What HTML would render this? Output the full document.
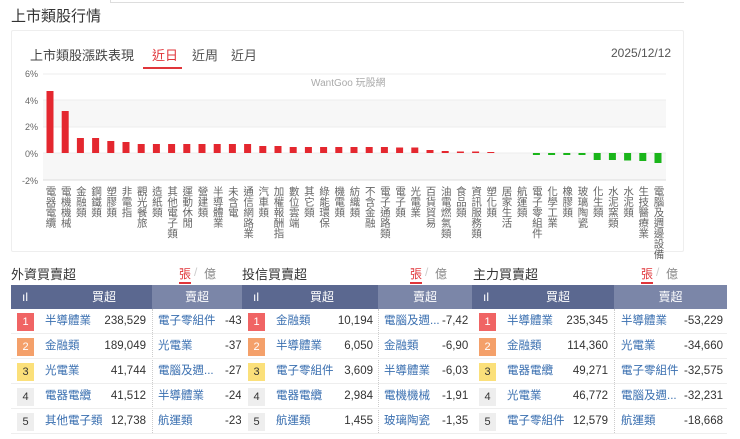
<!DOCTYPE html>
<html><head><meta charset="utf-8"><style>
*{margin:0;padding:0;box-sizing:border-box}
body{width:740px;height:438px;background:#fff;font-family:"Liberation Sans","Noto Sans CJK TC",sans-serif;position:relative;overflow:hidden;color:#333}
.a{position:absolute;white-space:nowrap}
.lab{position:absolute;top:186px;writing-mode:vertical-rl;font-size:10.5px;line-height:11px;color:#666;letter-spacing:0}
.hd{position:absolute;top:285px;height:24px;color:#fff;font-size:12px;line-height:24px;text-align:center}
.row{position:absolute;height:25px;font-size:12px;line-height:25px;border-bottom:1px solid #eee}
.bd{position:absolute;width:17px;height:18px;top:4px;font-size:11px;line-height:18px;text-align:center;color:#fff}
.n{position:absolute;color:#3a6fb0;font-size:11.5px}
.v{position:absolute;text-align:right;color:#333;font-size:11.5px}
</style></head><body>
<div class="a" style="left:110px;top:0;width:574px;height:3px;border-left:1px solid #ddd;border-bottom:1px solid #ddd"></div>
<div class="a" style="left:11px;top:5px;font-size:15px;color:#333">上市類股行情</div>
<div class="a" style="left:11px;top:30px;width:673px;height:222px;border:1px solid #eee;border-radius:2px"></div>
<div class="a" style="left:30px;top:45px;font-size:13px;color:#444">上市類股漲跌表現</div>
<div class="a" style="left:152px;top:45px;font-size:13px;color:#e0353a">近日</div>
<div class="a" style="left:143px;top:67px;width:39px;height:2px;background:#e0353a"></div>
<div class="a" style="left:192px;top:45px;font-size:13px;color:#555">近周</div>
<div class="a" style="left:231px;top:45px;font-size:13px;color:#555">近月</div>
<div class="a" style="left:611px;top:46px;font-size:12px;color:#555">2025/12/12</div>
<svg class="a" style="left:0;top:0" width="740" height="260">
<rect x="43" y="100" width="623" height="27" fill="#f7f7f7"/>
<rect x="43" y="153" width="623" height="27" fill="#f7f7f7"/>
<g stroke="#eee"><line x1="43" y1="74" x2="666" y2="74"/><line x1="43" y1="100" x2="666" y2="100"/><line x1="43" y1="127" x2="666" y2="127"/><line x1="43" y1="153" x2="666" y2="153"/><line x1="43" y1="180" x2="666" y2="180" stroke="#ddd"/></g>
<g font-size="9" fill="#666" text-anchor="end" font-family="Liberation Sans"><text x="38" y="77">6%</text><text x="38" y="104">4%</text><text x="38" y="130">2%</text><text x="38" y="157">0%</text><text x="38" y="184">-2%</text></g>
<text x="311" y="86" font-size="10" fill="#aaa" font-family="Liberation Sans,Noto Sans CJK TC,sans-serif">WantGoo 玩股網</text>
<g fill="#e4272f">
<rect x="46.5" y="91" width="7" height="62"/><rect x="61.7" y="111" width="7" height="42"/><rect x="76.9" y="138" width="7" height="15"/><rect x="92.1" y="138" width="7" height="15"/><rect x="107.3" y="141" width="7" height="12"/><rect x="122.5" y="142" width="7" height="11"/><rect x="137.7" y="144" width="7" height="9"/><rect x="152.9" y="144" width="7" height="9"/><rect x="168.1" y="144" width="7" height="9"/><rect x="183.3" y="144" width="7" height="9"/><rect x="198.5" y="144" width="7" height="9"/><rect x="213.7" y="144" width="7" height="9"/><rect x="228.9" y="144" width="7" height="9"/><rect x="244.1" y="144" width="7" height="9"/><rect x="259.3" y="146" width="7" height="7"/><rect x="274.5" y="146" width="7" height="7"/><rect x="289.7" y="147" width="7" height="6"/><rect x="304.9" y="147" width="7" height="6"/><rect x="320.1" y="147" width="7" height="6"/><rect x="335.3" y="147" width="7" height="6"/><rect x="350.5" y="147" width="7" height="6"/><rect x="365.7" y="147" width="7" height="6"/><rect x="380.9" y="147" width="7" height="6"/><rect x="396.1" y="147.5" width="7" height="5.5"/><rect x="411.3" y="147.5" width="7" height="5.5"/><rect x="426.5" y="150" width="7" height="3"/><rect x="441.7" y="151" width="7" height="2"/><rect x="456.9" y="151.5" width="7" height="1.5"/><rect x="472.1" y="151.5" width="7" height="1.5"/><rect x="487.3" y="152" width="7" height="1"/>
</g>
<g fill="#1ab51a">
<rect x="532.9" y="153" width="7" height="2"/><rect x="548.1" y="153" width="7" height="2"/><rect x="563.3" y="153" width="7" height="2"/><rect x="578.5" y="153" width="7" height="2"/><rect x="593.7" y="153" width="7" height="7"/><rect x="608.9" y="153" width="7" height="7"/><rect x="624.1" y="153" width="7" height="7.5"/><rect x="639.3" y="153" width="7" height="8"/><rect x="654.5" y="153" width="7" height="10"/>
</g>
</svg>
<div class="lab" style="left:44.5px">電器電纜</div><div class="lab" style="left:59.7px">電機機械</div><div class="lab" style="left:74.9px">金融類</div><div class="lab" style="left:90.1px">鋼鐵類</div><div class="lab" style="left:105.3px">塑膠類</div><div class="lab" style="left:120.5px">非電指</div><div class="lab" style="left:135.7px">觀光餐旅</div><div class="lab" style="left:150.9px">造紙類</div><div class="lab" style="left:166.1px">其他電子類</div><div class="lab" style="left:181.3px">運動休閒</div><div class="lab" style="left:196.5px">營建類</div><div class="lab" style="left:211.7px">半導體業</div><div class="lab" style="left:226.9px">未含電</div><div class="lab" style="left:242.1px">通信網路業</div><div class="lab" style="left:257.3px">汽車類</div><div class="lab" style="left:272.5px">加權報酬指</div><div class="lab" style="left:287.7px">數位雲端</div><div class="lab" style="left:302.9px">其它類</div><div class="lab" style="left:318.1px">綠能環保</div><div class="lab" style="left:333.3px">機電類</div><div class="lab" style="left:348.5px">紡織類</div><div class="lab" style="left:363.7px">不含金融</div><div class="lab" style="left:378.9px">電子通路類</div><div class="lab" style="left:394.1px">電子類</div><div class="lab" style="left:409.3px">光電業</div><div class="lab" style="left:424.5px">百貨貿易</div><div class="lab" style="left:439.7px">油電燃氣類</div><div class="lab" style="left:454.9px">食品類</div><div class="lab" style="left:470.1px">資訊服務類</div><div class="lab" style="left:485.3px">塑化類</div><div class="lab" style="left:500.5px">居家生活</div><div class="lab" style="left:515.7px">航運類</div><div class="lab" style="left:530.9px">電子零組件</div><div class="lab" style="left:546.1px">化學工業</div><div class="lab" style="left:561.3px">橡膠類</div><div class="lab" style="left:576.5px">玻璃陶瓷</div><div class="lab" style="left:591.7px">化生類</div><div class="lab" style="left:606.9px">水泥窯類</div><div class="lab" style="left:622.1px">水泥類</div><div class="lab" style="left:637.3px">生技醫療業</div><div class="lab" style="left:652.5px">電腦及週邊設備</div>

<div class="a" style="left:11px;top:264px;font-size:13px;color:#333">外資買賣超</div>
<div class="a" style="left:179px;top:265px;font-size:12px;color:#e0353a">張</div><div class="a" style="left:179px;top:282px;width:12px;height:2px;background:#e0353a"></div>
<div class="a" style="left:194px;top:265px;font-size:12px;color:#ccc">/</div><div class="a" style="left:204px;top:265px;font-size:12px;color:#888">億</div>
<div class="a" style="left:242px;top:264px;font-size:13px;color:#333">投信買賣超</div>
<div class="a" style="left:410px;top:265px;font-size:12px;color:#e0353a">張</div><div class="a" style="left:410px;top:282px;width:12px;height:2px;background:#e0353a"></div>
<div class="a" style="left:425px;top:265px;font-size:12px;color:#ccc">/</div><div class="a" style="left:435px;top:265px;font-size:12px;color:#888">億</div>
<div class="a" style="left:473px;top:264px;font-size:13px;color:#333">主力買賣超</div>
<div class="a" style="left:641px;top:265px;font-size:12px;color:#e0353a">張</div><div class="a" style="left:641px;top:282px;width:12px;height:2px;background:#e0353a"></div>
<div class="a" style="left:656px;top:265px;font-size:12px;color:#ccc">/</div><div class="a" style="left:666px;top:265px;font-size:12px;color:#888">億</div>

<div class="hd" style="left:11px;width:141px;background:#5b6890"><span style="position:absolute;left:0;width:28px">ıl</span><span style="position:absolute;left:45px;width:96px">買超</span></div>
<div class="hd" style="left:152px;width:90px;background:#7b86a8">賣超</div>
<div class="hd" style="left:242px;width:136px;background:#5b6890"><span style="position:absolute;left:0;width:28px">ıl</span><span style="position:absolute;left:30px;width:100px">買超</span></div>
<div class="hd" style="left:378px;width:94px;background:#7b86a8">賣超</div>
<div class="hd" style="left:472px;width:142px;background:#5b6890"><span style="position:absolute;left:0;width:28px">ıl</span><span style="position:absolute;left:30px;width:112px">買超</span></div>
<div class="hd" style="left:614px;width:113px;background:#7b86a8">賣超</div>

<div class="a" style="left:152px;top:309px;height:124px;border-left:1px dotted #ccc"></div>
<div class="a" style="left:378px;top:309px;height:124px;border-left:1px dotted #ccc"></div>
<div class="a" style="left:614px;top:309px;height:124px;border-left:1px dotted #ccc"></div>

<div style="position:absolute;left:0;top:309px;width:740px;height:130px;overflow:hidden">
<div class="row" style="left:11px;top:0;width:716px"></div>
<div class="row" style="left:11px;top:25px;width:716px"></div>
<div class="row" style="left:11px;top:50px;width:716px"></div>
<div class="row" style="left:11px;top:75px;width:716px"></div>
<div class="row" style="left:11px;top:100px;width:716px"></div>
</div>
<div style="position:absolute;left:0;top:309px;width:740px;height:130px;font-size:12px;line-height:25px">
<div style="position:absolute;left:0;top:0;width:241px;height:130px;overflow:hidden">
<div class="bd" style="left:17px;top:4px;background:#f06464">1</div><div class="n" style="left:45px;top:0">半導體業</div><div class="v" style="left:90px;width:56px;top:0">238,529</div><div class="n" style="left:158px;top:0">電子零組件</div><div class="v" style="left:225px;top:0">-43,</div>
<div class="bd" style="left:17px;top:29px;background:#f4a06a">2</div><div class="n" style="left:45px;top:25px">金融類</div><div class="v" style="left:90px;width:56px;top:25px">189,049</div><div class="n" style="left:158px;top:25px">光電業</div><div class="v" style="left:225px;top:25px">-37,</div>
<div class="bd" style="left:17px;top:54px;background:#fbe07a;color:#333">3</div><div class="n" style="left:45px;top:50px">光電業</div><div class="v" style="left:90px;width:56px;top:50px">41,744</div><div class="n" style="left:158px;top:50px">電腦及週...</div><div class="v" style="left:225px;top:50px">-27,</div>
<div class="bd" style="left:17px;top:79px;background:#eee;color:#333">4</div><div class="n" style="left:45px;top:75px">電器電纜</div><div class="v" style="left:90px;width:56px;top:75px">41,512</div><div class="n" style="left:158px;top:75px">半導體業</div><div class="v" style="left:225px;top:75px">-24,</div>
<div class="bd" style="left:17px;top:104px;background:#eee;color:#333">5</div><div class="n" style="left:45px;top:100px">其他電子類</div><div class="v" style="left:90px;width:56px;top:100px">12,738</div><div class="n" style="left:158px;top:100px">航運類</div><div class="v" style="left:225px;top:100px">-23,</div>
</div>
<div style="position:absolute;left:241px;top:0;width:231px;height:130px;overflow:hidden">
<div class="bd" style="left:7px;top:4px;background:#f06464">1</div><div class="n" style="left:35px;top:0">金融類</div><div class="v" style="left:70px;width:62px;top:0">10,194</div><div class="n" style="left:143px;top:0">電腦及週...</div><div class="v" style="left:201px;top:0">-7,42</div>
<div class="bd" style="left:7px;top:29px;background:#f4a06a">2</div><div class="n" style="left:35px;top:25px">半導體業</div><div class="v" style="left:70px;width:62px;top:25px">6,050</div><div class="n" style="left:143px;top:25px">金融類</div><div class="v" style="left:201px;top:25px">-6,90</div>
<div class="bd" style="left:7px;top:54px;background:#fbe07a;color:#333">3</div><div class="n" style="left:35px;top:50px">電子零組件</div><div class="v" style="left:70px;width:62px;top:50px">3,609</div><div class="n" style="left:143px;top:50px">半導體業</div><div class="v" style="left:201px;top:50px">-6,03</div>
<div class="bd" style="left:7px;top:79px;background:#eee;color:#333">4</div><div class="n" style="left:35px;top:75px">電器電纜</div><div class="v" style="left:70px;width:62px;top:75px">2,984</div><div class="n" style="left:143px;top:75px">電機機械</div><div class="v" style="left:201px;top:75px">-1,91</div>
<div class="bd" style="left:7px;top:104px;background:#eee;color:#333">5</div><div class="n" style="left:35px;top:100px">航運類</div><div class="v" style="left:70px;width:62px;top:100px">1,455</div><div class="n" style="left:143px;top:100px">玻璃陶瓷</div><div class="v" style="left:201px;top:100px">-1,35</div>
</div>
<div style="position:absolute;left:472px;top:0;width:256px;height:130px;overflow:hidden">
<div class="bd" style="left:7px;top:4px;background:#f06464">1</div><div class="n" style="left:35px;top:0">半導體業</div><div class="v" style="left:70px;width:66px;top:0">235,345</div><div class="n" style="left:149px;top:0">半導體業</div><div class="v" style="left:190px;width:61px;top:0">-53,229</div>
<div class="bd" style="left:7px;top:29px;background:#f4a06a">2</div><div class="n" style="left:35px;top:25px">金融類</div><div class="v" style="left:70px;width:66px;top:25px">114,360</div><div class="n" style="left:149px;top:25px">光電業</div><div class="v" style="left:190px;width:61px;top:25px">-34,660</div>
<div class="bd" style="left:7px;top:54px;background:#fbe07a;color:#333">3</div><div class="n" style="left:35px;top:50px">電器電纜</div><div class="v" style="left:70px;width:66px;top:50px">49,271</div><div class="n" style="left:149px;top:50px">電子零組件</div><div class="v" style="left:190px;width:61px;top:50px">-32,575</div>
<div class="bd" style="left:7px;top:79px;background:#eee;color:#333">4</div><div class="n" style="left:35px;top:75px">光電業</div><div class="v" style="left:70px;width:66px;top:75px">46,772</div><div class="n" style="left:149px;top:75px">電腦及週...</div><div class="v" style="left:190px;width:61px;top:75px">-32,231</div>
<div class="bd" style="left:7px;top:104px;background:#eee;color:#333">5</div><div class="n" style="left:35px;top:100px">電子零組件</div><div class="v" style="left:70px;width:66px;top:100px">12,579</div><div class="n" style="left:149px;top:100px">航運類</div><div class="v" style="left:190px;width:61px;top:100px">-18,668</div>
</div>
</div>
</body></html>
